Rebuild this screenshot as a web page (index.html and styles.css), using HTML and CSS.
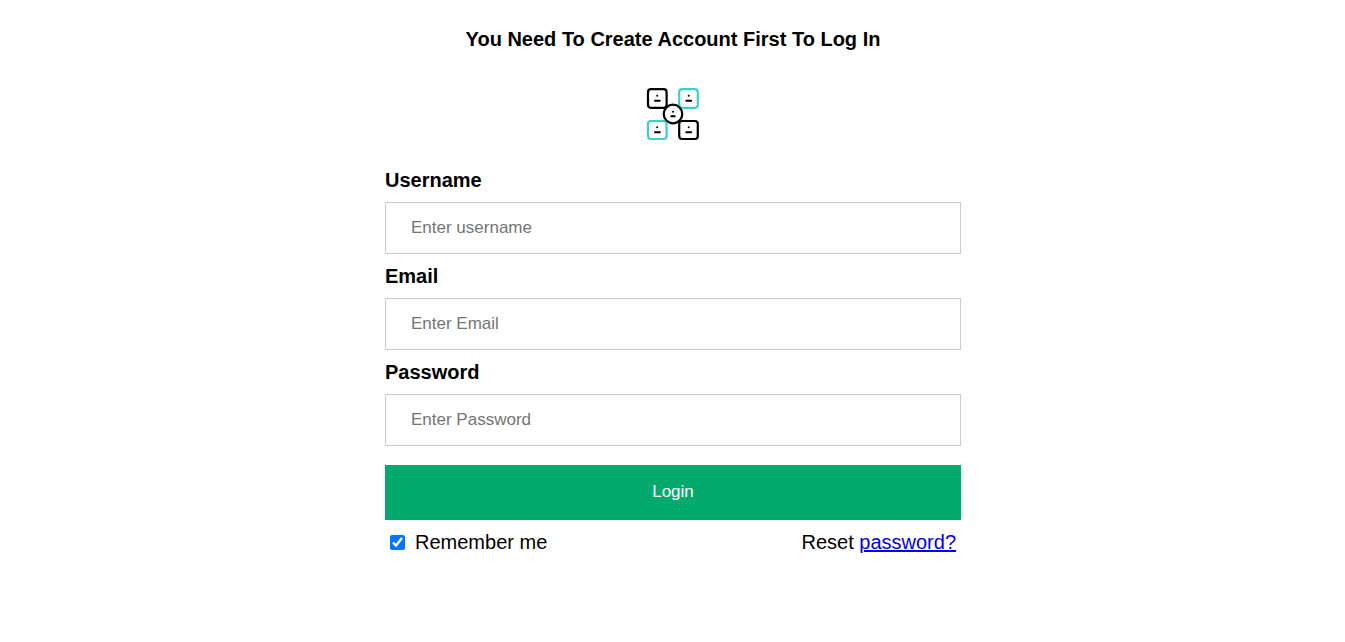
FILE: index.html
```html
<!DOCTYPE html>
<html lang="en">
<head>
<meta charset="utf-8">
<meta name="viewport" content="width=device-width, initial-scale=1">
<title>Log In</title>
<link rel="stylesheet" href="styles.css">
</head>
<body>
<main class="page">
  <h1 class="title">You Need To Create Account First To Log In</h1>
  <form class="form">
    <svg class="logo" viewBox="0 0 54 54" aria-hidden="true">
      <g fill="#fff" stroke-width="2.2">
        <rect x="33.2" y="2.2" width="18.6" height="18.6" rx="3" stroke="#3ccfc8"/>
        <rect x="2" y="34" width="18.600" height="18" rx="3" stroke="#3ccfc8"/>
        <rect x="2" y="2.200" width="18.600" height="18.600" rx="3" stroke="#000"/>
        <rect x="33.200" y="34" width="18.600" height="18" rx="3" stroke="#000"/>
        <circle cx="27" cy="27" r="9.3" stroke="#000"/>
      </g>
      <g fill="#000">
        <circle cx="11.200" cy="8.800" r="1"/><rect x="8" y="12.700" width="6.800" height="2" rx="1"/>
        <circle cx="42.700" cy="8.800" r="1"/><rect x="39.300" y="12.700" width="6.800" height="2" rx="1"/>
        <circle cx="27" cy="24.700" r="1"/><rect x="24.300" y="28.300" width="5.400" height="2" rx="1"/>
        <circle cx="11.200" cy="40.200" r="1"/><rect x="8" y="44.300" width="6.800" height="2" rx="1"/>
        <circle cx="42.700" cy="40.200" r="1"/><rect x="39.300" y="44.300" width="6.800" height="2" rx="1"/>
      </g>
    </svg>
    <label class="label" for="username">Username</label>
    <input class="field" id="username" type="text" placeholder="Enter username">
    <label class="label" for="email">Email</label>
    <input class="field" id="email" type="email" placeholder="Enter Email">
    <label class="label" for="password">Password</label>
    <input class="field" id="password" type="password" placeholder="Enter Password">
    <button class="login" type="submit">Login</button>
    <div class="options">
      <label class="remember"><input class="check" type="checkbox" checked>Remember me</label>
      <span class="reset">Reset <a href="#">password?</a></span>
    </div>
  </form>
</main>
</body>
</html>
```
FILE: styles.css
```css
* { box-sizing: border-box; }
body {
  margin: 0;
  background: #fff;
  color: #000;
  font-family: "Liberation Sans", Arial, sans-serif;
  font-size: 20px;
  line-height: 24px;
}
.page {
  display: flex;
  flex-direction: column;
  align-items: center;
  padding: 27px 16px 27px 17px;
}
.title {
  margin: 0 0 36px;
  font-size: 20px;
  line-height: 24px;
}
.form {
  display: flex;
  flex-direction: column;
  width: 100%;
  max-width: 576px;
}
.logo {
  align-self: center;
  width: 54px;
  height: 54px;
  margin-bottom: 27px;
}
.label {
  font-weight: bold;
}
.field {
  width: 100%;
  margin: 10px 0;
  padding: 15px 25px;
  border: 1px solid #ccc;
  background: #fff;
  font: 17px/20px "Liberation Sans", Arial, sans-serif;
}
.login {
  margin: 9px 0 10px;
  padding: 17px 20px 18px;
  border: 0;
  background: #04aa6d;
  color: #fff;
  font: 17px/20px "Liberation Sans", Arial, sans-serif;
  cursor: pointer;
}
.options {
  display: flex;
  justify-content: space-between;
  padding: 0 5px;
}
.remember {
  display: flex;
  align-items: center;
  gap: 10px;
}
.check {
  width: 15px;
  height: 15px;
  margin: 0;
}
```
